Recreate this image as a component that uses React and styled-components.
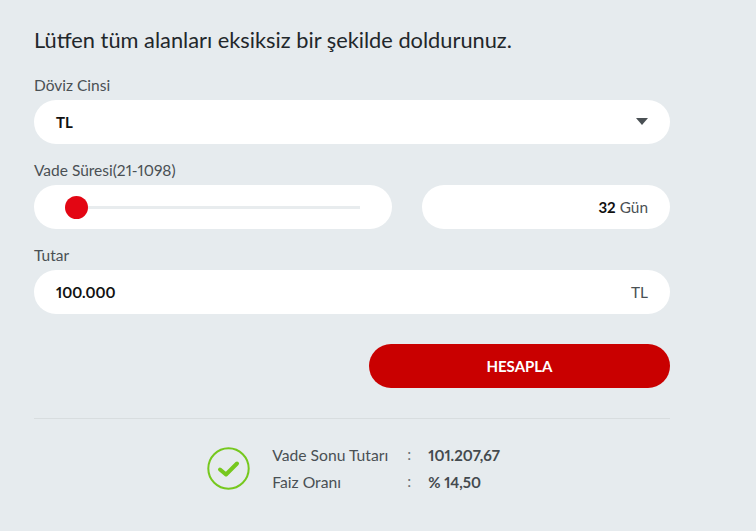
import React from 'react';
import styled, { createGlobalStyle } from 'styled-components';

const Global = createGlobalStyle`
  html, body { margin: 0; padding: 0; background: #e6ebee; }
  body { font-family: "Lato", "Noto Sans", sans-serif; color: #4a5054; font-variant-numeric: proportional-nums; }
`;
const Page = styled.main`
  width: 670px;
  height: 531px;
  box-sizing: border-box;
  padding: 26px 0 0 34px;
  overflow: hidden;
`;
const Title = styled.h1`
  margin: 0 0 22px;
  font-size: 21.8px;
  line-height: 27px;
  font-weight: 400;
  color: #22272b;
`;
const Label = styled.div`
  font-size: 15.5px;
  line-height: 20px;
  color: #4a5054;
  margin-bottom: 5px;
`;
const Field = styled.div`
  height: 44px;
  box-sizing: border-box;
  background: #fff;
  border-radius: 22px;
  display: flex;
  align-items: center;
  justify-content: space-between;
  padding: 0 22px 1px;
  margin-bottom: 16px;
`;
const Value = styled.span`
  font-size: 15px;
  font-weight: 700;
  color: #111;
`;
const Unit = styled.span`
  font-size: 15.4px;
  color: #4a5054;
`;
const Row = styled.div`
  display: flex;
  gap: 30px;
`;
const SliderField = styled(Field)`
  width: 358px;
  padding: 0 32px 0 31px;
  justify-content: flex-start;
`;
const AmountField = styled(Field)`
  width: 248px;
  justify-content: flex-end;
  gap: 4px;
`;
const Track = styled.div`
  position: relative;
  flex: 1;
  height: 3px;
  background: #e8ecee;
`;
const Thumb = styled.div`
  position: absolute;
  left: 0;
  top: -10px;
  width: 23px;
  height: 23px;
  border-radius: 50%;
  background: #e30613;
`;
const Caret = styled.div`
  width: 0;
  height: 0;
  border-left: 6px solid transparent;
  border-right: 6px solid transparent;
  border-top: 7px solid #4a5054;
`;
const Actions = styled.div`
  display: flex;
  justify-content: flex-end;
  margin-top: 30px;
`;
const Button = styled.button`
  width: 301px;
  height: 44px;
  border: 0;
  border-radius: 22px;
  background: #c90000;
  color: #fff;
  font: 700 15px "Lato", sans-serif;
`;
const Divider = styled.hr`
  border: 0;
  border-top: 1px solid #d8dddf;
  margin: 30px 0 0;
`;
const Result = styled.section`
  display: flex;
  align-items: center;
  justify-content: center;
  gap: 22px;
  margin-top: 26px;
  padding-left: 3px;
`;
const Table = styled.div`
  display: grid;
  grid-template-columns: 135px 21px auto;
  row-gap: 7px;
  font-size: 15.7px;
  line-height: 20px;
`;
const Key = styled.span`
  color: #4a5054;
`;
const Sep = styled.span`
  color: #6a7074;
  transform: translateY(-1px);
`;
const Strong = styled.span`
  font-weight: 700;
  font-size: 15px;
  color: #444a4e;
`;

export default function App() {
  return (
    <Page>
      <Global />
      <Title>Lütfen tüm alanları eksiksiz bir şekilde doldurunuz.</Title>
      <Label>Döviz Cinsi</Label>
      <Field><Value>TL</Value><Caret /></Field>
      <Label>Vade Süresi(21-1098)</Label>
      <Row>
        <SliderField><Track><Thumb /></Track></SliderField>
        <AmountField><Value>32</Value><Unit>Gün</Unit></AmountField>
      </Row>
      <Label>Tutar</Label>
      <Field><Value>100.000</Value><Unit>TL</Unit></Field>
      <Actions><Button>HESAPLA</Button></Actions>
      <Divider />
      <Result>
        <svg width="43" height="43" viewBox="0 0 43 43" fill="none" aria-hidden="true">
          <circle cx="21.5" cy="21.5" r="20.2" stroke="#76c81e" strokeWidth="2" />
          <path d="M13 22.5l6 5L30 16.5" stroke="#76c81e" strokeWidth="4" strokeLinecap="round" strokeLinejoin="round" />
        </svg>
        <Table>
          <Key>Vade Sonu Tutarı</Key><Sep>:</Sep><Strong>101.207,67</Strong>
          <Key>Faiz Oranı</Key><Sep>:</Sep><Strong>% 14,50</Strong>
        </Table>
      </Result>
    </Page>
  );
}
